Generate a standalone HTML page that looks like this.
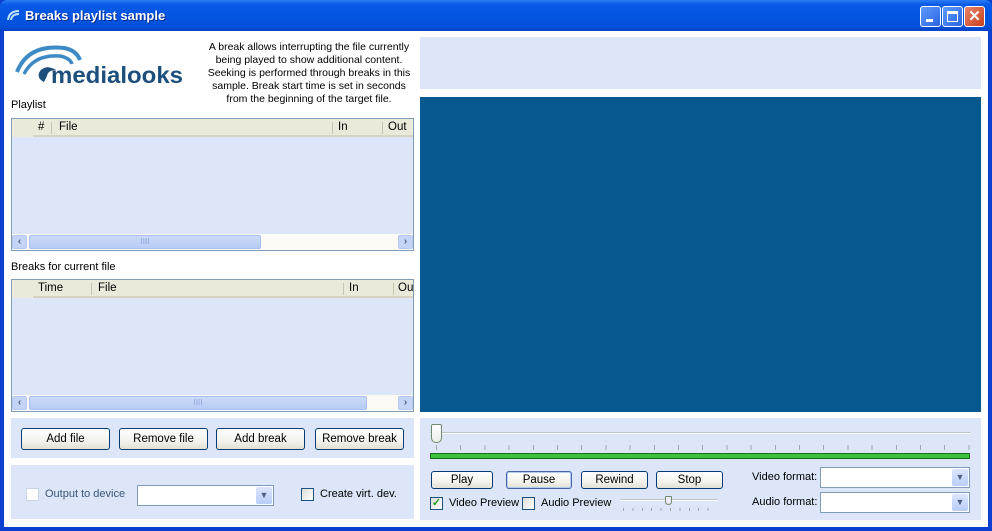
<!DOCTYPE html>
<html><head><style>
*{margin:0;padding:0;box-sizing:border-box}
body{width:992px;height:531px;overflow:hidden;background:#0a3fd0;font-family:"Liberation Sans",sans-serif;font-size:11px;color:#000;position:relative}
.a{position:absolute}
.title{left:0;top:0;width:992px;height:31px;background:linear-gradient(#2a7df5 0,#0a5ae6 15%,#0355e2 50%,#0450da 85%,#0643c8 100%);border-radius:7px 7px 0 0}
.client{left:4px;top:31px;width:984px;height:496px;background:#fff}
.panel{background:#dce6f8}
.btn{position:absolute;border:1px solid #003c74;border-radius:3px;background:linear-gradient(#fff,#f3f2ec 60%,#e2e0d4);text-align:center;font-size:11.5px;line-height:18px}
.lst{position:absolute;border:1px solid #7f9db9;background:#dce6f8}
.hdr{position:absolute;left:0;top:0;right:0;height:18px;background:#ebe9da;border-bottom:2px solid #d6d2c2;font-size:11.5px;line-height:17px}
.sep{position:absolute;top:3px;width:1px;height:12px;background:#c7c5b2}
.sb{position:absolute;left:0;right:0;bottom:0;height:16px;background:#fbfaf4}
.arr{position:absolute;top:1px;width:15px;height:14px;background:#c4d4f7;border:1px solid #b5c8f0;border-radius:2px;color:#4d6185;font-size:10px;line-height:12px;text-align:center;font-weight:bold}
.thumb{position:absolute;top:1px;height:14px;background:linear-gradient(#cbdaf8,#b7ccf5);border:1px solid #a8bff0;border-radius:2px;color:#8aa4d8;font-size:8px;text-align:center;line-height:12px}
.combo{position:absolute;background:#fff;border:1px solid #7f9db9}
.combo i{position:absolute;right:1px;top:1px;bottom:1px;width:16px;background:linear-gradient(#dbe6fd,#b9cdf7);border-radius:2px;color:#4d6185;font-style:normal;font-size:9px;text-align:center;line-height:17px}
.cb{position:absolute;width:13px;height:13px;border:1px solid #1c5180;background:linear-gradient(135deg,#dcdcd6,#fff)}
.lbl{position:absolute;font-size:11px;white-space:nowrap}
</style></head><body>
<div class="a title"></div>
<svg class="a" style="left:6px;top:8px" width="16" height="14" viewBox="0 0 16 14"><path d="M2 12 Q3 3 13 3" stroke="#bfe0ff" stroke-width="2" fill="none"/><path d="M5 12 Q6 6 13 6" stroke="#bfe0ff" stroke-width="2" fill="none"/></svg>
<div class="a" style="left:25px;top:8px;color:#fff;font-weight:bold;font-size:13px;text-shadow:1px 1px #0a2a8a">Breaks playlist sample</div>
<div class="a" style="left:920px;top:6px;width:21px;height:21px;border:1px solid #fff;border-radius:3px;background:linear-gradient(135deg,#5d9bff,#2d63e0)"><div class="a" style="left:5px;top:12px;width:7px;height:3px;background:#fff"></div></div>
<div class="a" style="left:942px;top:6px;width:21px;height:21px;border:1px solid #fff;border-radius:3px;background:linear-gradient(135deg,#5d9bff,#2d63e0)"><div class="a" style="left:4px;top:4px;width:11px;height:11px;border:1px solid #fff;border-top-width:3px"></div></div>
<div class="a" style="left:964px;top:6px;width:21px;height:21px;border:1px solid #fff;border-radius:3px;background:linear-gradient(135deg,#e9856a,#c8401c);color:#fff;font-weight:bold;font-size:15px;text-align:center;line-height:19px">✕</div>
<div class="a client"></div>

<svg class="a" style="left:14px;top:40px" width="175" height="52" viewBox="0 0 175 52">
<path d="M3 32 Q14 4 50 8 Q62 10 66 20" stroke="#3d8ac4" stroke-width="4" fill="none"/>
<path d="M10 34 Q20 14 46 16 Q56 18 58 24" stroke="#3d8ac4" stroke-width="3.5" fill="none"/>
<path d="M30 42 Q22 38 26 31 Q32 24 42 30 Q34 30 33 36 Z" fill="#1d4f7c"/>
<text x="37" y="43" textLength="132" lengthAdjust="spacingAndGlyphs" font-family="Liberation Sans,sans-serif" font-weight="bold" font-size="23" fill="#1d4f7c">medialooks</text>
</svg>
<div class="a" style="left:190px;top:41px;width:238px;text-align:center;line-height:13px;font-size:10.5px">A break allows interrupting the file currently<br>being played to show additional content.<br>Seeking is performed through breaks in this<br>sample. Break start time is set in seconds<br>from the beginning of the target file.</div>
<div class="lbl" style="left:11px;top:99px;font-size:11px">Playlist</div>

<div class="lst" style="left:11px;top:118px;width:403px;height:133px">
<div class="hdr" style="left:21px"><span class="a" style="left:5px">#</span><div class="sep" style="left:18px"></div><span class="a" style="left:26px">File</span><div class="sep" style="left:299px"></div><span class="a" style="left:305px">In</span><div class="sep" style="left:349px"></div><span class="a" style="left:355px">Out</span></div>
<div class="hdr" style="width:21px;border-bottom:0"></div>
<div class="sb"><div class="arr" style="left:0">‹</div><div class="thumb" style="left:17px;width:232px">IIII</div><div class="arr" style="right:0">›</div></div>
</div>
<div class="lbl" style="left:11px;top:261px;font-size:11px">Breaks for current file</div>
<div class="lst" style="left:11px;top:279px;width:403px;height:133px">
<div class="hdr" style="left:21px"><span class="a" style="left:5px">Time</span><div class="sep" style="left:58px"></div><span class="a" style="left:65px">File</span><div class="sep" style="left:310px"></div><span class="a" style="left:316px">In</span><div class="sep" style="left:360px"></div><span class="a" style="left:365px">Ou</span></div>
<div class="hdr" style="width:21px;border-bottom:0"></div>
<div class="sb"><div class="arr" style="left:0">‹</div><div class="thumb" style="left:17px;width:338px">IIII</div><div class="arr" style="right:0">›</div></div>
</div>

<div class="a panel" style="left:11px;top:418px;width:403px;height:40px"></div>
<div class="btn" style="left:21px;top:428px;width:89px;height:22px;line-height:20px">Add file</div>
<div class="btn" style="left:119px;top:428px;width:89px;height:22px;line-height:20px">Remove file</div>
<div class="btn" style="left:216px;top:428px;width:89px;height:22px;line-height:20px">Add break</div>
<div class="btn" style="left:315px;top:428px;width:89px;height:22px;line-height:20px">Remove break</div>

<div class="a panel" style="left:11px;top:465px;width:403px;height:54px"></div>
<div class="cb" style="left:26px;top:488px;border-color:#c9d4e4;background:#fff"></div>
<div class="lbl" style="left:45px;top:488px;color:#3a5577">Output to device</div>
<div class="combo" style="left:137px;top:485px;width:137px;height:21px"><i>▼</i></div>
<div class="cb" style="left:301px;top:488px"></div>
<div class="lbl" style="left:320px;top:488px">Create virt. dev.</div>

<div class="a panel" style="left:420px;top:37px;width:561px;height:52px"></div>
<div class="a" style="left:420px;top:97px;width:561px;height:315px;background:#06588f"></div>

<div class="a panel" style="left:420px;top:418px;width:561px;height:102px"></div>
<div class="a" style="left:430px;top:432px;width:540px;height:2px;background:#bcc4cc;border-bottom:1px solid #fff"></div>
<div class="a" style="left:431px;top:424px;width:11px;height:19px;background:linear-gradient(#fff,#e8efe6);border:1px solid #6e8a6e;border-radius:2px 2px 5px 5px"></div>
<div class="a" style="left:436px;top:445px;width:534px;height:5px;background:repeating-linear-gradient(90deg,#9aa 0 1px,transparent 1px 24.2px)"></div>
<div class="a" style="left:430px;top:453px;width:540px;height:6px;background:#3cc23c;border:1px solid #1a6e1a"></div>

<div class="btn" style="left:431px;top:471px;width:62px;height:18px;line-height:16px">Play</div>
<div class="btn" style="left:506px;top:471px;width:66px;height:18px;line-height:16px;border-color:#4664a8;box-shadow:inset 0 0 0 1px #b6cbf2">Pause</div>
<div class="btn" style="left:581px;top:471px;width:67px;height:18px;line-height:16px">Rewind</div>
<div class="btn" style="left:656px;top:471px;width:67px;height:18px;line-height:16px">Stop</div>
<div class="cb" style="left:430px;top:497px;color:#21a121;font-size:11px;line-height:11px;text-align:center;font-weight:bold">✓</div>
<div class="lbl" style="left:449px;top:497px">Video Preview</div>
<div class="cb" style="left:522px;top:497px"></div>
<div class="lbl" style="left:541px;top:497px">Audio Preview</div>
<div class="a" style="left:620px;top:499px;width:98px;height:2px;background:#bcc4cc;border-bottom:1px solid #fff"></div>
<div class="a" style="left:665px;top:496px;width:7px;height:9px;border:1px solid #6e8a6e;border-radius:1px 1px 4px 4px;background:#eef"></div>
<div class="a" style="left:623px;top:508px;width:94px;height:3px;background:repeating-linear-gradient(90deg,#9aa 0 1px,transparent 1px 9.4px)"></div>
<div class="lbl" style="left:752px;top:471px">Video format:</div>
<div class="combo" style="left:820px;top:467px;width:150px;height:21px"><i>▼</i></div>
<div class="lbl" style="left:752px;top:496px">Audio format:</div>
<div class="combo" style="left:820px;top:492px;width:150px;height:21px"><i>▼</i></div>
</body></html>
